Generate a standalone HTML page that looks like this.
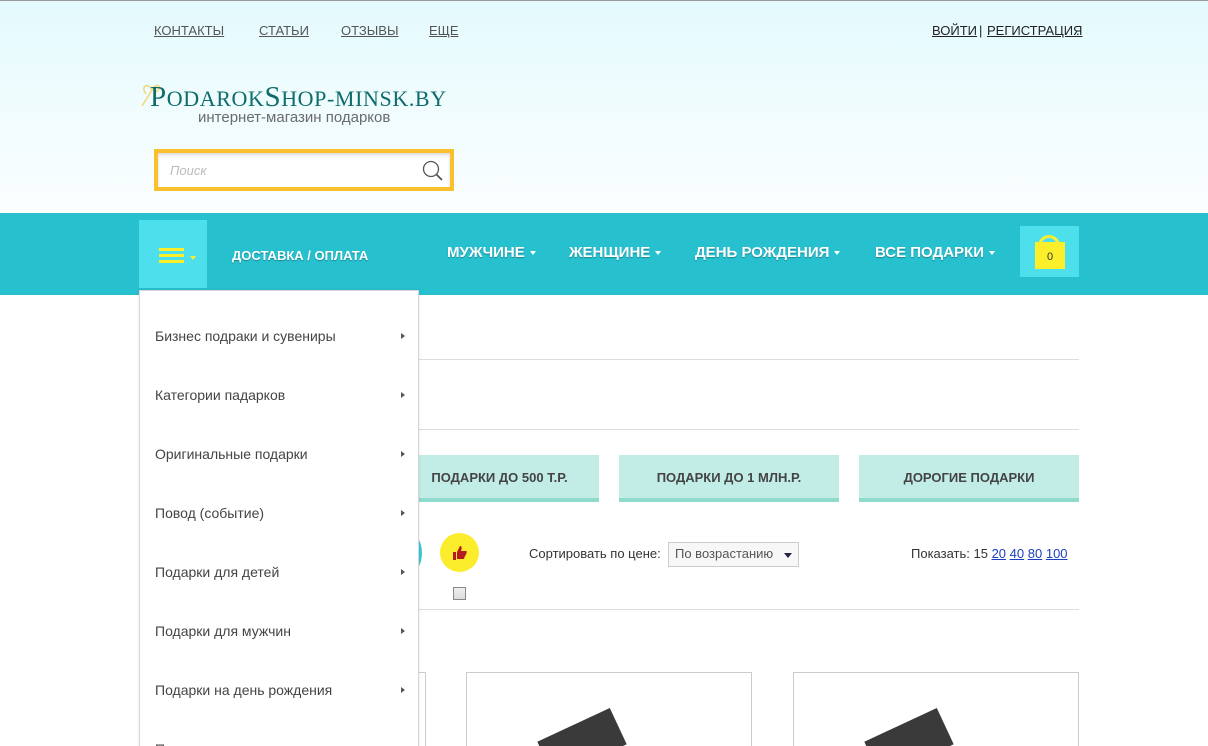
<!DOCTYPE html>
<html><head><meta charset="utf-8"><style>
*{margin:0;padding:0;box-sizing:border-box}
html,body{width:1208px;height:746px;overflow:hidden}
body{position:relative;font-family:"Liberation Sans","DejaVu Sans",sans-serif;background:#fff}
.hdr{position:absolute;left:0;top:0;width:1208px;height:213px;background:linear-gradient(#e4fafd,#fbfeff);border-top:1px solid #9a9a9a}
.a{position:absolute;font-size:13px;color:#555;text-decoration:underline}
.nav{position:absolute;left:0;top:213px;width:1208px;height:82px;background:#27c0cf}
.nv{position:absolute;top:244px;color:#fff;font-weight:bold;font-size:15px;text-shadow:0 1px 1px rgba(0,0,0,.3)}
.tri{display:inline-block;width:0;height:0;border-left:3px solid transparent;border-right:3px solid transparent;border-top:4px solid #fff;vertical-align:middle;margin-left:5px}
.dd{position:absolute;left:139px;top:290px;width:280px;height:470px;background:#fff;border:1px solid #d6d6d6;box-shadow:0 0 3px rgba(0,0,0,.1)}
.dd div{position:absolute;left:15px;font-size:14px;color:#444;width:250px}
.dd div:after{content:"";position:absolute;right:0;top:5px;border-top:3px solid transparent;border-bottom:3px solid transparent;border-left:4px solid #555}
.hl{position:absolute;left:418px;width:661px;height:1px;background:#ddd}
.btn{position:absolute;top:455px;height:47px;background:#c2ece6;border-bottom:4px solid #8fdccf;font-weight:bold;font-size:13px;color:#444;text-align:center;line-height:46px}
.card{position:absolute;top:672px;height:90px;border:1px solid #ccc;background:#fff;overflow:hidden}
.prod{position:absolute;left:75px;top:50px;width:80px;height:40px;background:#3a3a3a;transform:rotate(-25deg)}
</style></head><body>
<div class="hdr"></div>
<span class="a" style="left:154px;top:23px">КОНТАКТЫ</span>
<span class="a" style="left:259px;top:23px">СТАТЬИ</span>
<span class="a" style="left:341px;top:23px">ОТЗЫВЫ</span>
<span class="a" style="left:429px;top:23px">ЕЩЕ</span>
<span class="a" style="left:932px;top:23px;color:#222">ВОЙТИ</span><span style="position:absolute;left:979px;top:23px;font-size:13px;color:#222">|</span><span class="a" style="left:987px;top:23px;color:#222">РЕГИСТРАЦИЯ</span><span style="position:absolute;left:1076px;top:23px;font-size:13px">.</span>
<svg style="position:absolute;left:138px;top:80px" width="30" height="30"><path d="M8 14 C2 6 10 2 14 10 C18 2 26 6 18 12 M14 10 L4 26" stroke="#f2d77a" stroke-width="1.5" fill="none"/></svg>
<div style="position:absolute;left:150px;top:81px;font-family:'Liberation Serif',serif;color:#0f6b6c;font-size:29px;letter-spacing:0.6px;white-space:nowrap"><span>P</span><span style="font-size:22px">ODAROK</span>S<span style="font-size:22px">HOP-MINSK.BY</span></div>
<div style="position:absolute;left:198px;top:109px;font-size:15px;color:#6b6b6b">интернет-магазин подарков</div>
<div style="position:absolute;left:154px;top:149px;width:300px;height:42px;border:4px solid #fbc02d;background:#fff;box-shadow:inset 0 2px 3px rgba(0,0,0,.15)">
<span style="position:absolute;left:12px;top:10px;font-size:13px;font-style:italic;color:#bbb">Поиск</span>
<svg style="position:absolute;left:263px;top:6px" width="24" height="24"><circle cx="10" cy="10" r="7.5" stroke="#555" stroke-width="1.3" fill="none"/><path d="M15.5 15.5 L21 21" stroke="#555" stroke-width="1.8"/></svg></div>
<div class="nav"></div>
<div style="position:absolute;left:139px;top:220px;width:68px;height:68px;background:#4ddfec"></div>
<div style="position:absolute;left:159px;top:248px;width:25px;height:3px;background:#fbef2c;box-shadow:0 6px 0 #fbef2c,0 12px 0 #fbef2c"></div>
<div style="position:absolute;left:190px;top:256px;border-left:3px solid transparent;border-right:3px solid transparent;border-top:4px solid #fbef2c"></div>
<div class="nv" style="left:232px;top:248px;font-size:13px">ДОСТАВКА / ОПЛАТА</div>
<div class="nv" style="left:447px">МУЖЧИНЕ<span class="tri"></span></div>
<div class="nv" style="left:569px">ЖЕНЩИНЕ<span class="tri"></span></div>
<div class="nv" style="left:695px">ДЕНЬ РОЖДЕНИЯ<span class="tri"></span></div>
<div class="nv" style="left:875px">ВСЕ ПОДАРКИ<span class="tri"></span></div>
<div style="position:absolute;left:1020px;top:226px;width:59px;height:51px;background:#4ddfec"></div>
<div style="position:absolute;left:1038px;top:235px;width:22px;height:14px;border:3px solid #fbef2c;border-bottom:none;border-radius:11px 11px 0 0"></div>
<div style="position:absolute;left:1035px;top:242px;width:30px;height:27px;background:#fbef2c;font-size:11px;color:#333;text-align:center;line-height:30px">0</div>
<div class="hl" style="top:359px"></div>
<div class="hl" style="top:429px"></div>
<div class="btn" style="left:400px;width:199px">ПОДАРКИ ДО 500 Т.Р.</div>
<div class="btn" style="left:619px;width:220px">ПОДАРКИ ДО 1 МЛН.Р.</div>
<div class="btn" style="left:859px;width:220px">ДОРОГИЕ ПОДАРКИ</div>
<div style="position:absolute;left:400px;top:534px;width:22px;height:38px;border-radius:50%;background:#3bc8d6"></div>
<div style="position:absolute;left:440px;top:533px;width:39px;height:39px;border-radius:50%;background:#fbec2c"></div>
<svg style="position:absolute;left:450px;top:543px" width="20" height="20"><path d="M3 9h3v8H3z M7 9 L10 3 C12 3 12 5 11 8 H16 C17 8 17 10 16 10 C17 11 16 12 15 12 C16 13 15 14 14 14 C15 15 14 16 13 16 H7z" fill="#b51b23"/></svg>
<div style="position:absolute;left:453px;top:587px;width:13px;height:13px;border:1px solid #888;background:linear-gradient(#eee,#ddd)"></div>
<div style="position:absolute;left:529px;top:546px;font-size:13px;color:#333">Сортировать по цене:</div>
<div style="position:absolute;left:668px;top:542px;width:131px;height:25px;border:1px solid #ccc;background:#f7f7f7;font-size:13px;color:#555;padding:3px 6px">По возрастанию<span style="position:absolute;right:6px;top:10px;border-left:4px solid transparent;border-right:4px solid transparent;border-top:5px solid #224"></span></div>
<div style="position:absolute;left:911px;top:546px;font-size:13px;color:#333">Показать: 15 <u style="color:#1a3fbf">20</u> <u style="color:#1a3fbf">40</u> <u style="color:#1a3fbf">80</u> <u style="color:#1a3fbf">100</u></div>
<div class="hl" style="top:609px"></div>
<div class="card" style="left:380px;width:46px"></div>
<div class="card" style="left:466px;width:286px"><div class="prod"></div></div>
<div class="card" style="left:793px;width:286px"><div class="prod"></div></div>
<div class="dd">
<div style="top:37px">Бизнес подраки и сувениры</div>
<div style="top:96px">Категории падарков</div>
<div style="top:155px">Оригинальные подарки</div>
<div style="top:214px">Повод (событие)</div>
<div style="top:273px">Подарки для детей</div>
<div style="top:332px">Подарки для мужчин</div>
<div style="top:391px">Подарки на день рождения</div>
<div style="top:450px">Подарки для женщин</div>
</div>
</body></html>
